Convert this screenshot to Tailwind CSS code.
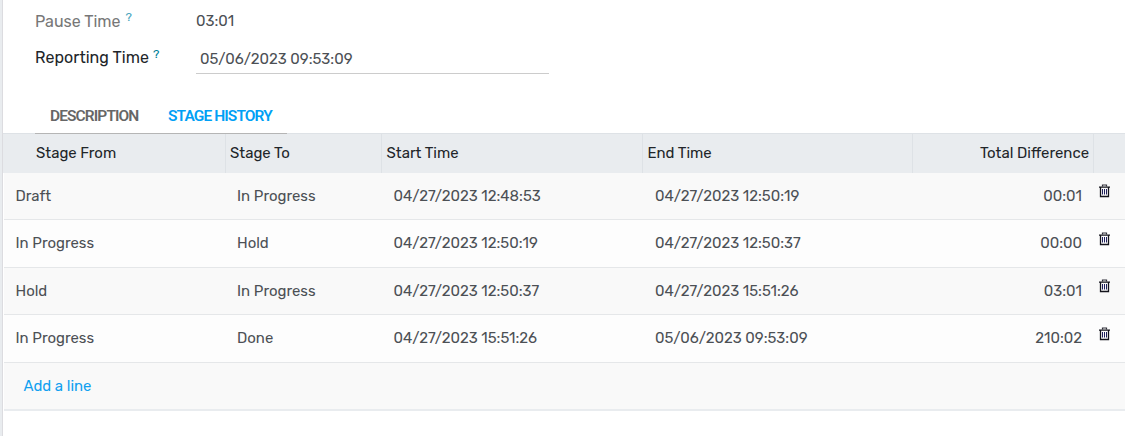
<!DOCTYPE html>
<html lang="en">
<head>
    <meta charset="UTF-8">
    <meta name="viewport" content="width=device-width, initial-scale=1.0">
    <title>Stage History</title>
    <script src="https://cdn.jsdelivr.net/npm/@tailwindcss/browser@4"></script>
</head>
<body class="h-screen overflow-hidden bg-[#e9ecef] pl-[2px] font-['Rubik','Roboto',sans-serif] text-[14.95px] text-[#4c5055]">
    <svg class="hidden">
        <symbol id="trash" viewBox="0 0 13 14">
            <path d="M4.5 2.5V1h4v1.5" fill="none" stroke="#30303a" stroke-width="1.2"/>
            <path d="M1 3.2h11M2.5 3v9.5h8V3" fill="none" stroke="#14141c" stroke-width="1.3"/>
            <path d="M4.5 5v5.5M6.5 5v5.5M8.5 5v5.5" stroke="#20205c" stroke-width="1"/>
        </symbol>
    </svg>

    <div class="h-full border-l border-[#dcdce0] bg-white">
        <!-- Form fields -->
        <div class="flex h-[38px] pt-[9px] pl-8 leading-6">
            <div class="w-[161px] pt-px text-base text-[#777]">Pause Time <sup class="relative -top-[6px] left-px align-baseline text-xs leading-none text-[#4aa5bd]">?</sup></div>
            <div>03:01</div>
        </div>
        <div class="flex h-[58px] pl-8 leading-6">
            <div class="w-[161px] pt-2 text-base tracking-[0.05px] text-[#212529]">Reporting Time <sup class="relative -top-[5px] align-baseline text-xs leading-none text-[#008299]">?</sup></div>
            <div class="h-9 w-[353px] border-b border-[#ccc] pt-[9px] pl-1">05/06/2023 09:53:09</div>
        </div>

        <!-- Tabs -->
        <div class="flex h-[37px] pl-8 font-['Roboto',sans-serif] text-[15.5px] leading-[22px] font-semibold tracking-[-0.9px]">
            <div class="w-[118px] pt-[9px] pl-[15px] text-[#666]">DESCRIPTION</div>
            <div class="w-[134px] pt-[9px] pl-[15px] text-[#00a0f5]">STAGE HISTORY</div>
        </div>

        <!-- Stage table -->
        <div class="flex h-px bg-[#dee2e6]"><div class="ml-8 w-[252px] bg-[#b5b5b5]"></div></div>
        <div class="grid h-[39px] grid-cols-[223px_156px_261px_270px_181px_1fr] bg-[#e9ecef] leading-[38px] text-[#212529]">
            <div class="border-r border-[#dee2e6] pl-[33px]">Stage From</div>
            <div class="border-r border-[#dee2e6] pl-1">Stage To</div>
            <div class="border-r border-[#dee2e6] pl-[4.5px]">Start Time</div>
            <div class="border-r border-[#dee2e6] pl-[4.5px]">End Time</div>
            <div class="border-r border-[#dee2e6] pr-1 text-right">Total Difference</div>
            <div></div>
        </div>
        <div class="ml-px">
            <div class="grid h-[47px] grid-cols-[222px_156px_261px_270px_181px_1fr] border-b border-[#e5e7e9] bg-[#f9f9f9] leading-[46px]">
                <div class="pl-[11.5px]">Draft</div>
                <div class="pl-[11px]">In Progress</div>
                <div class="pl-[11.5px]">04/27/2023 12:48:53</div>
                <div class="pl-3">04/27/2023 12:50:19</div>
                <div class="pr-3 text-right">00:01</div>
                <svg class="mt-[11px] ml-1 h-[14px] w-[13px]"><use href="#trash"/></svg>
            </div>
            <div class="grid h-12 grid-cols-[222px_156px_261px_270px_181px_1fr] border-b border-[#e5e7e9] bg-[#fdfdfd] leading-[46px]">
                <div class="pl-[11.5px]">In Progress</div>
                <div class="pl-[11px]">Hold</div>
                <div class="pl-[11.5px]">04/27/2023 12:50:19</div>
                <div class="pl-3">04/27/2023 12:50:37</div>
                <div class="pr-3 text-right">00:00</div>
                <svg class="mt-3 ml-1 h-[14px] w-[13px]"><use href="#trash"/></svg>
            </div>
            <div class="grid h-[47px] grid-cols-[222px_156px_261px_270px_181px_1fr] border-b border-[#e5e7e9] bg-[#f9f9f9] leading-[46px]">
                <div class="pl-[11.5px]">Hold</div>
                <div class="pl-[11px]">In Progress</div>
                <div class="pl-[11.5px]">04/27/2023 12:50:37</div>
                <div class="pl-3">04/27/2023 15:51:26</div>
                <div class="pr-3 text-right">03:01</div>
                <svg class="mt-[11px] ml-1 h-[14px] w-[13px]"><use href="#trash"/></svg>
            </div>
            <div class="grid h-12 grid-cols-[222px_156px_261px_270px_181px_1fr] border-b border-[#e5e7e9] bg-[#fdfdfd] leading-[46px]">
                <div class="pl-[11.5px]">In Progress</div>
                <div class="pl-[11px]">Done</div>
                <div class="pl-[11.5px]">04/27/2023 15:51:26</div>
                <div class="pl-3">05/06/2023 09:53:09</div>
                <div class="pr-3 text-right">210:02</div>
                <svg class="mt-3 ml-1 h-[14px] w-[13px]"><use href="#trash"/></svg>
            </div>
            <div class="h-12 border-b-2 border-[#e9ecef] bg-[#f9f9f9] pl-[19.5px] leading-[46px] text-[#10a0f0]">Add a line</div>
        </div>
    </div>
</body>
</html>
